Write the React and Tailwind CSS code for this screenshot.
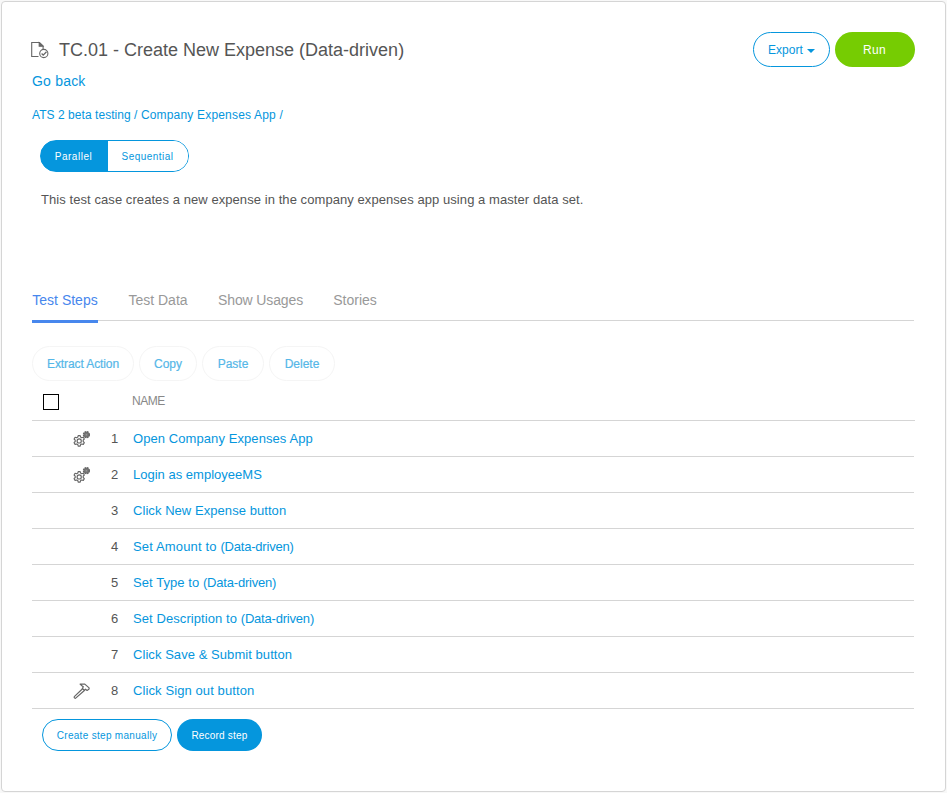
const steps = [
  { name: 'Open Company Expenses App', icon: 'gears', tracking: 'tracking-[0.08px]' },
  { name: 'Login as employeeMS', icon: 'gears', tracking: 'tracking-[0.01px]' },
  { name: 'Click New Expense button', tracking: 'tracking-[0.06px]' },
  { name: 'Set Amount to ', suffix: '(Data-driven)', tracking: 'tracking-[0.15px]' },
  { name: 'Set Type to ', suffix: '(Data-driven)', tracking: 'tracking-[0.07px]' },
  { name: 'Set Description to ', suffix: '(Data-driven)', tracking: 'tracking-[0.08px]' },
  { name: 'Click Save & Submit button', tracking: 'tracking-[0.06px]' },
  { name: 'Click Sign out button', icon: 'hammer', tracking: 'tracking-[0.1px]' },
];

const tabs = [
  { label: 'Test Steps', style: 'w-[66px] text-[#4787ed] shadow-[0_3px_0_#4787ed]' },
  { label: 'Test Data', style: 'w-[60px] text-[#999]' },
  { label: 'Show Usages', style: 'w-[85px] tracking-[-0.12px] text-[#999]' },
  { label: 'Stories', style: 'w-[44px] text-[#999]' },
];

const actions = [
  { label: 'Extract Action', style: 'w-[102px] tracking-[-0.1px]' },
  { label: 'Copy', style: 'w-[58px]' },
  { label: 'Paste', style: 'w-[62px]' },
  { label: 'Delete', style: 'w-[66px]' },
];

function DocumentIcon() {
  return (
    <svg className="-ml-px block shrink-0" width="18" height="18" viewBox="0 0 18 18" fill="none" stroke="#666" strokeWidth="1.1">
      <path d="M7.5 15.5H.7V1.5h7.8l3.6 3.5v3" />
      <path d="M8.2 1.7v3.5h3.7z" fill="#666" />
      <circle cx="12.8" cy="12.5" r="4.1" />
      <path d="m10.6 12.5 1.6 1.6 3.3-3.3" strokeWidth="1.3" />
    </svg>
  );
}

function GearsIcon() {
  return (
    <svg className="block" width="18" height="18" viewBox="0 0 18 18" fill="none" stroke="#666">
      <path
        d="M5.2 5.6h2l.4 1.5 1.1.6 1.6-.4 1 1.7-1.1 1.2v1.3l1.1 1.2-1 1.7-1.6-.4-1.1.6-.4 1.5h-2l-.4-1.5-1.1-.6-1.6.4-1-1.7 1.1-1.2v-1.3L1.1 9l1-1.7 1.6.4 1.1-.6z"
        strokeWidth="1.15"
        strokeLinejoin="round"
      />
      <circle cx="6.2" cy="10.9" r="2.1" strokeWidth="1.15" />
      <circle cx="13.4" cy="4.7" r="2.9" fill="#777" strokeWidth="1.5" strokeDasharray="1.7 .6" />
      <circle cx="13.4" cy="4.7" r=".8" fill="#999" stroke="none" />
    </svg>
  );
}

function HammerIcon() {
  return (
    <svg className="block" width="18" height="18" viewBox="0 0 18 18" fill="none" stroke="#666" strokeWidth="1.2" strokeLinejoin="round">
      <path d="M9.8 6.5 1.3 14.6q-.5 1.5 1.1 1.8L11.7 8.2" />
      <path d="M7.1 2.1h4.7l4.3 3.8v1.2l-2 1.3-1.6-1.2-1.2 1-1.9-1.7.9-1.7-1.4-1.1z" />
    </svg>
  );
}

export default function App() {
  return (
    <div className="h-[793px] w-[947px] bg-[#f8f8f8] p-px font-['Liberation_Sans',Arial,sans-serif] text-[#555]">
      <main className="flex h-[791px] w-[945px] flex-col rounded-[4px] border border-[#d5d5d5] bg-white pl-[30px]">
        <header className="flex h-[65px] w-[883px] items-end">
          <div className="flex h-[35px] grow items-center">
            <DocumentIcon />
            <h1 className="ml-[10px] whitespace-nowrap text-[18px] leading-[20px]">TC.01 - Create New Expense (Data-driven)</h1>
          </div>
          <button className="mr-[5px] flex h-[35px] w-[77px] items-center justify-center rounded-full border border-[#0596dd] text-[12px] tracking-[0.05px] text-[#0596dd]">
            Export
            <span className="ml-[4px] mt-[3px] border-x-4 border-t-4 border-x-transparent border-t-[#0596dd]" />
          </button>
          <button className="h-[35px] w-[80px] rounded-full bg-[#76cc02] pr-[1px] text-[12px] tracking-[0.3px] text-white">Run</button>
        </header>

        <a className="mt-[4px] h-[20px] text-[14px] leading-[20px] tracking-[0.2px] text-[#0596dd]">Go back</a>
        <nav className="mt-[15px] h-[18px] whitespace-nowrap text-[12px] leading-[18px] text-[#0596dd]">
          <span className="tracking-[0.05px]">ATS 2 beta testing / </span>
          <span className="tracking-[0.18px]">Company Expenses App /</span>
        </nav>

        <div className="ml-[8px] mt-[16px] flex h-[32px] w-[149px] shrink-0 overflow-hidden rounded-full border border-[#0596dd] bg-[linear-gradient(to_right,#0596dd_50%,white_50%)] text-[10px] tracking-[0.5px]">
          <button className="w-[67px] bg-[#0596dd] pr-[2px] text-white">Parallel</button>
          <button className="w-[80px] bg-white pr-[1px] tracking-[0.45px] text-[#0596dd]">Sequential</button>
        </div>
        <p className="ml-[9px] mt-[18px] h-[20px] whitespace-nowrap text-[13px] leading-[20px] tracking-[0.07px]">
          This test case creates a new expense in the company expenses app using a master data set.
        </p>

        <div className="mt-[70px] flex h-[41px] w-[882px] shrink-0 gap-[30px] rounded-tr-[3px] border-b border-[#d5d5d5] text-[14px]">
          {tabs.map((tab) => (
            <button key={tab.label} className={`h-[40px] whitespace-nowrap ${tab.style}`}>
              {tab.label}
            </button>
          ))}
        </div>

        <div className="mt-[25px] flex h-[35px] gap-[5px]">
          {actions.map((action) => (
            <button
              key={action.label}
              className={`h-[35px] rounded-full border border-[#f5f5f5] text-[12px] text-[#55b7e8] [-webkit-text-stroke:0.2px_#55b7e8] ${action.style}`}
            >
              {action.label}
            </button>
          ))}
        </div>

        <section className="w-[883px]">
          <div className="flex h-[40px] border-b border-[#d5d5d5]">
            <span className="ml-[11px] mt-[13px] size-[16px] border border-black" />
            <span className="ml-[73px] mt-[11px] text-[12px] leading-[18px] tracking-[-0.5px] text-[#888]">NAME</span>
          </div>
          {steps.map((step, index) => (
            <div key={index} className="flex h-[36px] w-[882px] items-center border-b border-[#d5d5d5] text-[13px]">
              <span className="ml-[41px] w-[18px]">
                {step.icon === 'gears' && <GearsIcon />}
                {step.icon === 'hammer' && <HammerIcon />}
              </span>
              <span className="ml-[20px] w-[22px]">{index + 1}</span>
              <a className={`whitespace-nowrap text-[#0596dd] ${step.tracking}`}>
                {step.name}
                {step.suffix && <span className="tracking-[-0.2px]">{step.suffix}</span>}
              </a>
            </div>
          ))}
        </section>

        <footer className="ml-[10px] mt-[10px] flex gap-[5px] text-[10px] tracking-[0.3px]">
          <button className="h-[32px] w-[130px] rounded-full border border-[#0596dd] text-[#0596dd]">Create step manually</button>
          <button className="h-[32px] w-[85px] rounded-full bg-[#0596dd] tracking-[0.2px] text-white">Record step</button>
        </footer>
      </main>
    </div>
  );
}
